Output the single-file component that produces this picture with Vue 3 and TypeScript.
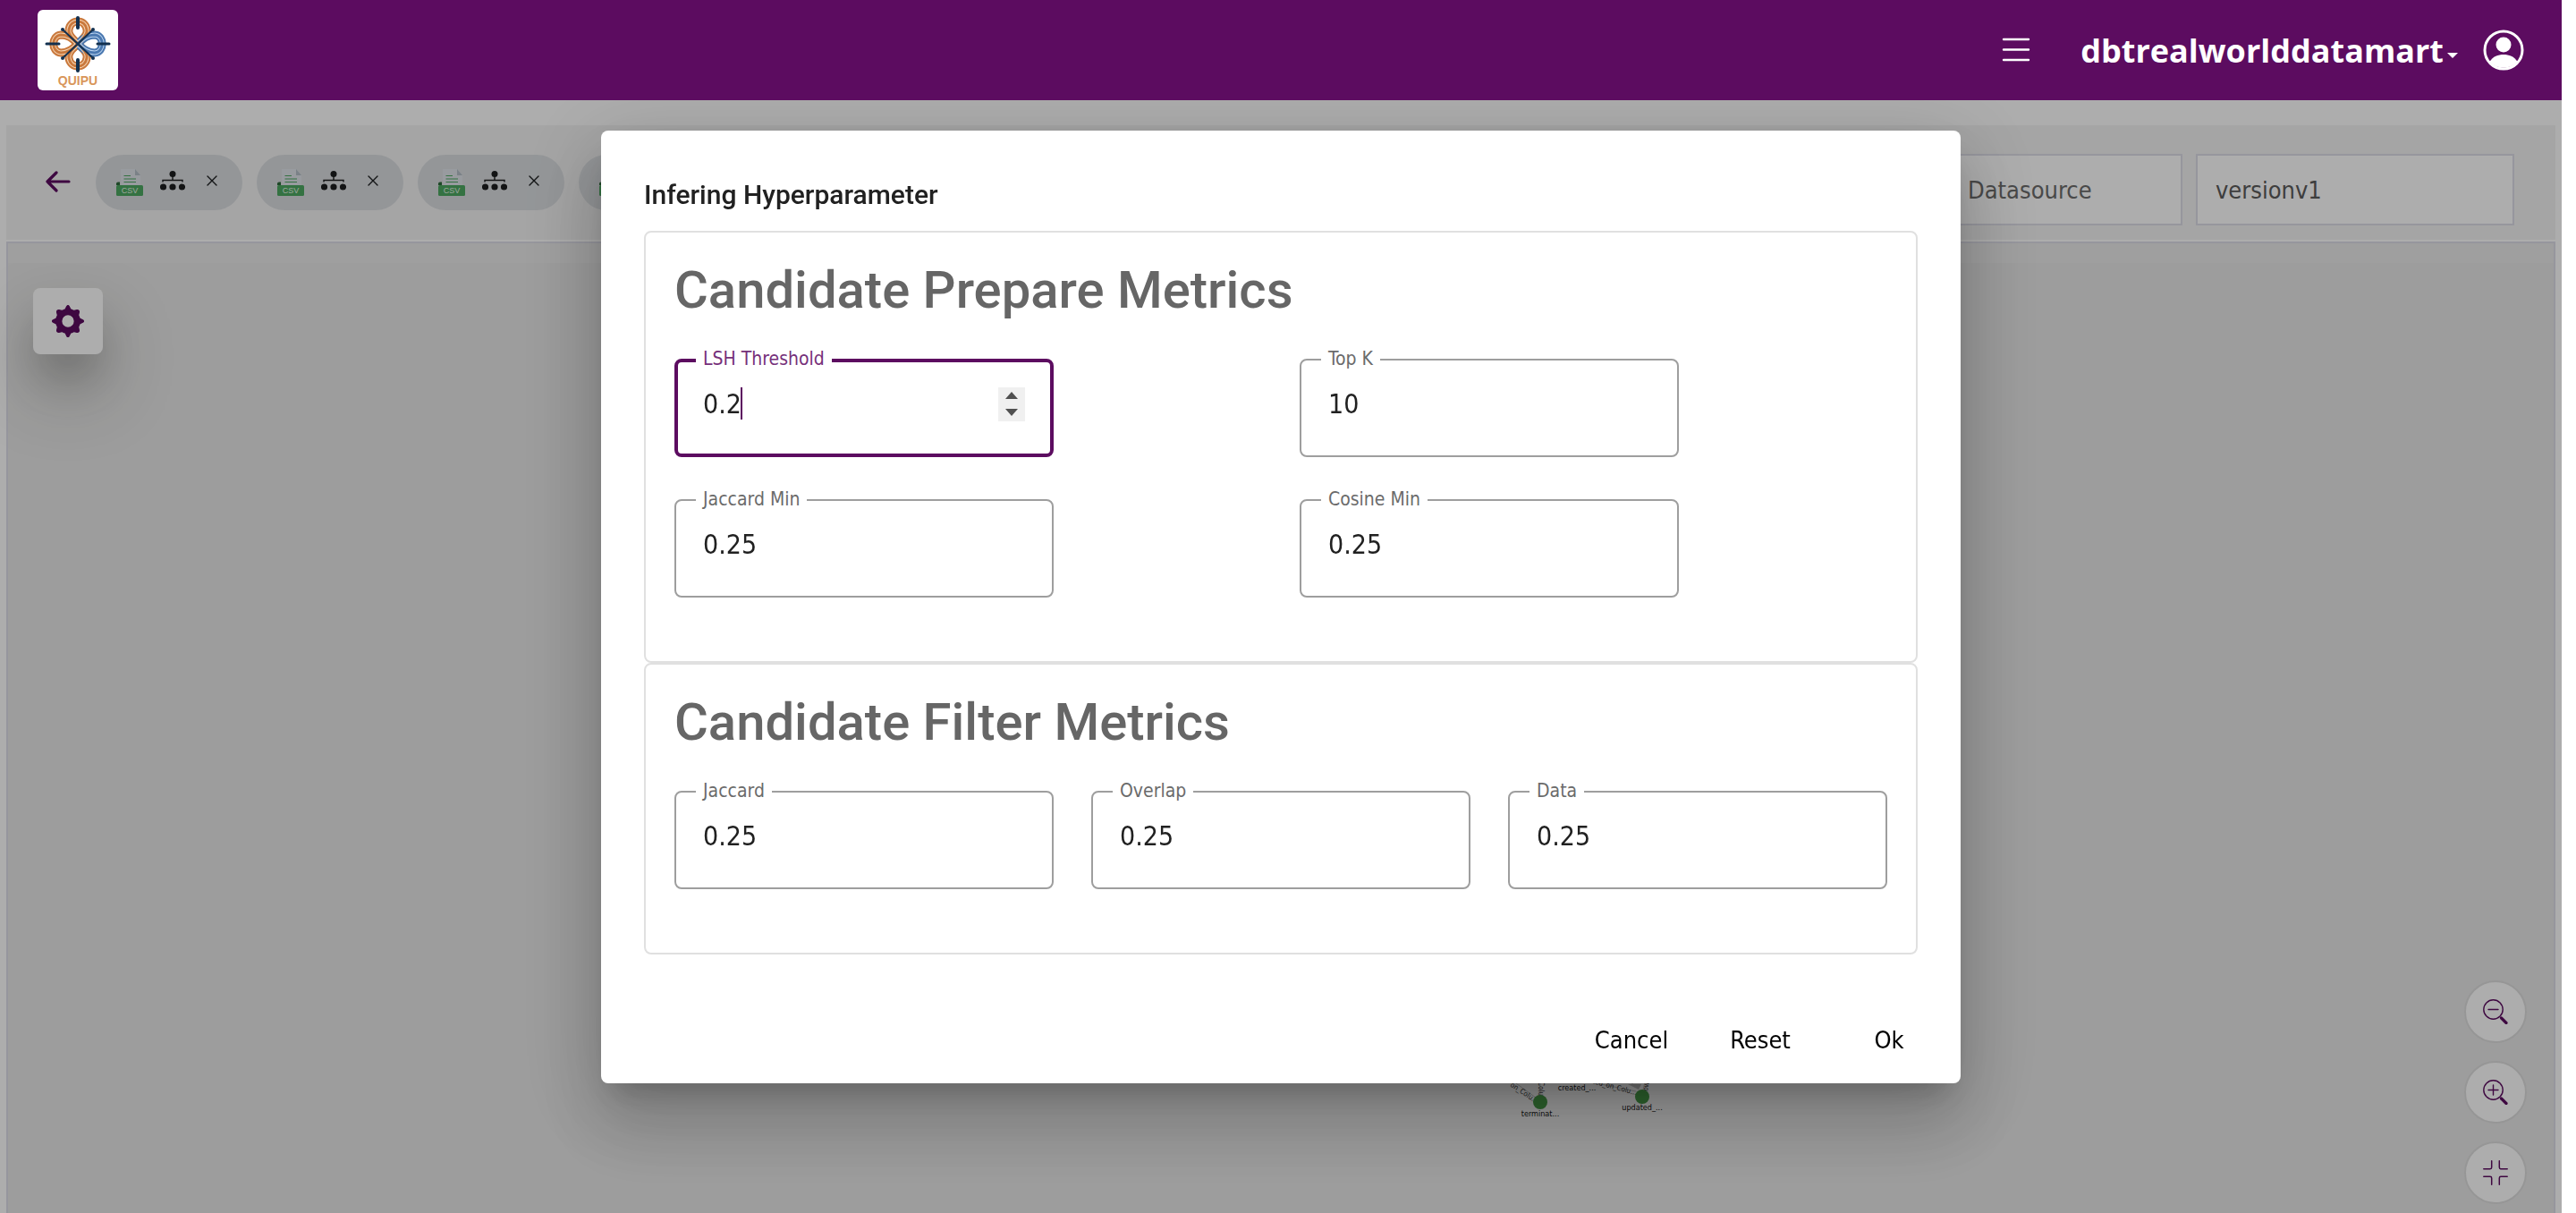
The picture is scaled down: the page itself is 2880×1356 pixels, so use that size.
<script setup lang="ts">
import { reactive } from 'vue'

interface Field {
  id: string
  label: string
  value: string
  active?: boolean
}

interface Group {
  title: string
  layout: string
  fields: Field[]
}

const sources: number[] = [1, 2, 3, 4]

const groups = reactive<Group[]>([
  {
    title: 'Candidate Prepare Metrics',
    layout: 'two',
    fields: [
      { id: 'lsh', label: 'LSH Threshold', value: '0.2', active: true },
      { id: 'topk', label: 'Top K', value: '10' },
      { id: 'jaccard-min', label: 'Jaccard Min', value: '0.25' },
      { id: 'cosine-min', label: 'Cosine Min', value: '0.25' },
    ],
  },
  {
    title: 'Candidate Filter Metrics',
    layout: 'three',
    fields: [
      { id: 'jaccard', label: 'Jaccard', value: '0.25' },
      { id: 'overlap', label: 'Overlap', value: '0.25' },
      { id: 'data', label: 'Data', value: '0.25' },
    ],
  },
])

function step(field: Field, delta: number): void {
  field.value = String(Math.round((Number(field.value) + delta) * 100) / 100)
}
</script>

<template>
  <div class="page">
    <header class="topbar">
      <a class="logo" href="#" aria-label="Home">
        <svg viewBox="0 0 90 90" width="90" height="90">
          <g fill="none" stroke-linecap="round">
            <g stroke="#c9783c" stroke-width="9">
              <path d="M45 38 C36 30 34 26 35 22 C37 10 53 10 55 22 C56 26 54 30 45 38" />
              <path d="M45 38 C36 46 34 50 35 54 C37 66 53 66 55 54 C56 50 54 46 45 38" />
              <path d="M45 38 C37 29 31 28 26 28 C15 29 15 47 26 48 C31 48 37 47 45 38" />
            </g>
            <path stroke="#4a78b0" stroke-width="9" d="M45 38 C53 29 59 28 64 28 C75 29 75 47 64 48 C59 48 53 47 45 38" />
            <g stroke="#f3d2b0" stroke-width="5">
              <path d="M45 38 C36 30 34 26 35 22 C37 10 53 10 55 22 C56 26 54 30 45 38" />
              <path d="M45 38 C36 46 34 50 35 54 C37 66 53 66 55 54 C56 50 54 46 45 38" />
              <path d="M45 38 C37 29 31 28 26 28 C15 29 15 47 26 48 C31 48 37 47 45 38" />
            </g>
            <path stroke="#b9d2ee" stroke-width="5" d="M45 38 C53 29 59 28 64 28 C75 29 75 47 64 48 C59 48 53 47 45 38" />
            <g stroke="#c9783c" stroke-width="3">
              <path d="M45 38 C36 30 34 26 35 22 C37 10 53 10 55 22 C56 26 54 30 45 38" />
              <path d="M45 38 C36 46 34 50 35 54 C37 66 53 66 55 54 C56 50 54 46 45 38" />
              <path d="M45 38 C37 29 31 28 26 28 C15 29 15 47 26 48 C31 48 37 47 45 38" />
            </g>
            <path stroke="#4a78b0" stroke-width="3" d="M45 38 C53 29 59 28 64 28 C75 29 75 47 64 48 C59 48 53 47 45 38" />
            <g stroke="#12304f">
              <path stroke-width="4" d="M45 9V20M45 56V68" />
              <path stroke-width="3" d="M10 38H24M67 38H80" />
              <path stroke-width="2" d="M28 22L62 54M62 22L28 54" />
              <path stroke-width="4" d="M28 22h0M62 54h0M62 22h0M28 54h0" />
            </g>
          </g>
          <text x="45" y="84" text-anchor="middle" class="logo-text">QUIPU</text>
        </svg>
      </a>
      <div class="topbar-right">
        <button class="plain" aria-label="Menu">
          <svg width="32" height="28" viewBox="0 0 32 28" fill="none" stroke="#fff" stroke-width="2.4" stroke-linecap="round">
            <path d="M2 2H30M2 13.500H30M2 25H30" />
          </svg>
        </button>
        <button class="plain account">
          dbtrealworlddatamart
          <svg width="12" height="6" viewBox="0 0 12 6"><path d="M0 0H12L6 6Z" fill="#fff" /></svg>
        </button>
        <button class="plain" aria-label="Profile">
          <svg width="46" height="46" viewBox="0 0 46 46">
            <circle cx="23" cy="23" r="21" fill="none" stroke="#fff" stroke-width="3" />
            <circle cx="23" cy="17" r="8.500" fill="#fff" />
            <path d="M7.500 36C11 30 17 28 23 28S35 30 38.500 36A21 21 0 0 1 7.500 36Z" fill="#fff" />
          </svg>
        </button>
      </div>
    </header>

    <main class="workspace">
      <div class="toolbar">
        <button class="plain back" aria-label="Back">
          <svg width="28" height="24" viewBox="0 0 28 24" fill="none" stroke="#5c0c60" stroke-width="3.200" stroke-linecap="round" stroke-linejoin="round">
            <path d="M26 12H2M12 2L2 12L12 22" />
          </svg>
        </button>
        <div class="chips">
          <div v-for="s in sources" :key="s" class="chip">
            <svg class="csv" width="30" height="30" viewBox="0 0 30 30">
              <path d="M5 0H21L27 7V19H5Z" fill="#e0e5ea" />
              <path d="M21 0L27 7H21Z" fill="#b4bfc8" />
              <path d="M8.500 7.500H16M8.500 11H22M8.500 14.500H22" stroke="#4da862" stroke-width="1.200" />
              <path d="M0 18V16Q0 14.500 2 14.500H4V18Z" fill="#2f6b3c" />
              <rect y="18" width="30" height="12" rx="1.500" fill="#4da862" />
              <text x="15" y="27" text-anchor="middle" class="csv-text">CSV</text>
            </svg>
            <svg class="tree" width="28" height="22" viewBox="0 0 28 22" fill="#1c1e1f">
              <circle cx="14" cy="3.500" r="3.500" />
              <circle cx="3.500" cy="18" r="3.600" />
              <circle cx="14" cy="18" r="3.600" />
              <circle cx="24.500" cy="18" r="3.600" />
              <path d="M14 5V10M3 12.500V10.500H25V12.500" fill="none" stroke="#1c1e1f" stroke-width="1.400" />
            </svg>
            <button class="plain" aria-label="Remove">
              <svg width="12" height="12" viewBox="0 0 12 12" fill="none" stroke="#1c1e1f" stroke-width="1.400" stroke-linecap="round">
                <path d="M1 1L11 11M11 1L1 11" />
              </svg>
            </button>
          </div>
        </div>
        <div class="pickers">
          <select class="box source" aria-label="Datasource">
            <option>Datasource</option>
          </select>
          <input class="box version" aria-label="Version" value="versionv1" />
        </div>
      </div>

      <div class="canvas">
        <button class="settings" aria-label="Settings">
          <svg width="38" height="38" viewBox="0 0 24 24" fill="#5c0c60">
            <path fill-rule="evenodd" d="M12 .6C13.200 .6 13.400 2.300 14.200 3.500C15.200 3.800 15.600 4 16.300 4.300C17.700 4 19 3.300 19.800 4.200C20.700 5 20 6.300 19.700 7.700C20 8.400 20.200 8.800 20.500 9.800C21.700 10.600 23.400 10.800 23.400 12S21.700 13.400 20.500 14.200C20.200 15.200 20 15.600 19.700 16.300C20 17.700 20.700 19 19.800 19.800C19 20.700 17.700 20 16.300 19.700C15.600 20 15.200 20.200 14.200 20.500C13.400 21.700 13.200 23.400 12 23.400S10.600 21.700 9.800 20.500C8.800 20.200 8.400 20 7.700 19.700C6.300 20 5 20.700 4.200 19.800C3.300 19 4 17.700 4.300 16.300C4 15.600 3.800 15.200 3.500 14.200C2.300 13.400 .6 13.200 .6 12S2.300 10.600 3.500 9.800C3.800 8.800 4 8.400 4.300 7.700C4 6.300 3.300 5 4.200 4.200C5 3.300 6.300 4 7.700 4.300C8.400 4 8.800 3.800 9.800 3.500C10.600 2.300 10.800 .6 12 .6ZM12 7.800A4.200 4.200 0 1 0 12 16.200A4.200 4.200 0 1 0 12 7.800Z" />
          </svg>
        </button>

        <svg class="graph" width="240" height="60" viewBox="0 0 240 60">
          <g stroke="#b5b5b5" stroke-width="1">
            <path d="M28 0L57 21M62 0V20M120 4L169 14M158 0L172 11M180 0L177 12" />
          </g>
          <path d="M160 6L172 12L175 6Z" fill="#b0b0b0" />
          <text class="edge" transform="translate(28 8) rotate(34)">on_Colu...</text>
          <text class="edge" transform="translate(60 3) rotate(90)">Colu</text>
          <text class="edge" transform="translate(120 5) rotate(15)">ted_on_Colu...</text>
          <text class="edge" transform="translate(182 14) rotate(-80)">ow</text>
          <circle cx="62" cy="26" r="8" fill="#439443" />
          <circle cx="176" cy="20" r="8" fill="#439443" />
          <text class="node" x="62" y="42">terminat...</text>
          <text class="node" x="176" y="35">updated_...</text>
          <text class="node" x="103" y="13">created_...</text>
        </svg>

        <div class="zoom">
          <button class="round" aria-label="Zoom out">
            <svg width="28" height="28" viewBox="0 0 28 28" fill="none" stroke="#5c0c60" stroke-width="1.400" stroke-linecap="round">
              <circle cx="11.500" cy="11.500" r="10.700" />
              <path d="M6 11.500H17" />
              <path d="M20.500 21L26 26.500" stroke-width="3.200" />
            </svg>
          </button>
          <button class="round" aria-label="Zoom in">
            <svg width="28" height="28" viewBox="0 0 28 28" fill="none" stroke="#5c0c60" stroke-width="1.400" stroke-linecap="round">
              <circle cx="11.500" cy="11.500" r="10.700" />
              <path d="M6 11.500H17M11.500 6V17" />
              <path d="M20.500 21L26 26.500" stroke-width="3.200" />
            </svg>
          </button>
          <button class="round" aria-label="Fit">
            <svg width="28" height="28" viewBox="0 0 28 28" fill="none" stroke="#5c0c60" stroke-width="1.500" stroke-linecap="round">
              <path d="M9.700 .8V8Q9.700 9.700 8 9.700H.8M18.300 .8V8Q18.300 9.700 20 9.700H27.200M.8 18.300H8Q9.700 18.300 9.700 20V27.200M27.200 18.300H20Q18.300 18.300 18.300 20V27.200" />
            </svg>
          </button>
        </div>
      </div>
    </main>

    <div class="backdrop">
      <form class="dialog" role="dialog" aria-labelledby="dialog-title" @submit.prevent>
        <div class="dialog-body">
          <h2 id="dialog-title" class="title">Infering Hyperparameter</h2>
          <section v-for="g in groups" :key="g.title" class="card">
            <h3 class="heading">{{ g.title }}</h3>
            <div class="grid" :class="g.layout">
              <div v-for="f in g.fields" :key="f.id" class="field" :class="{ active: f.active }">
                <label :for="f.id">{{ f.label }}</label>
                <input :id="f.id" v-model="f.value" type="number" step="0.01" />
                <template v-if="f.active">
                  <span class="caret"></span>
                  <span class="spinner">
                    <button type="button" aria-label="Increase" @click="step(f, 0.01)">
                      <svg width="14" height="8" viewBox="0 0 14 8"><path d="M7 0L14 8H0Z" fill="#505050" /></svg>
                    </button>
                    <button type="button" aria-label="Decrease" @click="step(f, -0.01)">
                      <svg width="14" height="8" viewBox="0 0 14 8"><path d="M0 0H14L7 8Z" fill="#505050" /></svg>
                    </button>
                  </span>
                </template>
              </div>
            </div>
          </section>
        </div>
        <div class="actions">
          <button type="button">Cancel</button>
          <button type="reset">Reset</button>
          <button type="submit">Ok</button>
        </div>
      </form>
    </div>
  </div>
</template>

<style>
body {
  margin: 0;
  background: #fff;
}
</style>

<style scoped>
.page {
  --purple: #5c0c60;
  --ui: "DejaVu Sans Condensed", "Noto Sans", sans-serif;
  display: flex;
  flex-direction: column;
  min-height: 100vh;
  box-sizing: border-box;
  padding-right: 16px;
  font-family: var(--ui);
}

.page * {
  box-sizing: border-box;
}

.plain {
  display: flex;
  align-items: center;
  padding: 0;
  border: 0;
  background: none;
}

svg {
  display: block;
}

.topbar {
  position: relative;
  z-index: 3;
  display: flex;
  align-items: center;
  justify-content: space-between;
  height: 112px;
  padding: 0 42px;
  background: var(--purple);
}

.logo {
  border-radius: 6px;
  background: #fff;
}

.logo-text {
  font: bold 14px "Liberation Sans", sans-serif;
  fill: #d9965a;
}

.topbar-right {
  display: flex;
  align-items: center;
}

.account {
  gap: 4px;
  margin: 0 28px 0 56px;
  color: #fff;
  font: bold 36px "Open Sans", sans-serif;
}

.account svg {
  margin-top: 12px;
}

.workspace {
  flex: 1;
  display: flex;
  flex-direction: column;
  gap: 2px;
  padding: 28px 7px 0;
}

.toolbar {
  display: flex;
  align-items: flex-start;
  height: 128px;
  padding: 32px 46px 0 44px;
  background: #f3f3f3;
}

.back {
  height: 62px;
  margin-right: 28px;
}

.chips {
  display: flex;
  gap: 16px;
  padding-top: 1px;
}

.chip {
  display: flex;
  align-items: center;
  width: 164px;
  height: 62px;
  padding: 0 23px;
  border-radius: 31px;
  background: #dbdee1;
}

.chip .tree {
  margin: 0 24px 4px 19px;
}

.chip .plain {
  margin-bottom: 4px;
}

.csv-text {
  font: 9px "Liberation Sans", sans-serif;
  fill: #e4f3e7;
}

.pickers {
  display: flex;
  gap: 15px;
  margin-left: auto;
}

.box {
  width: 356px;
  height: 80px;
  padding: 0 20px;
  border: 2px solid #dedee8;
  border-radius: 0;
  background: #fff;
  color: #5c5c5c;
  font: 27px var(--ui);
  appearance: none;
}

.source {
  width: 262px;
  color: #6c6c6c;
}

.canvas {
  flex: 1;
  position: relative;
  padding: 50px 28px 0;
  border: 2px solid #dedee8;
  border-bottom: 0;
  background: linear-gradient(#ebebeb 22px, #e7e7e7 22px);
}

.settings {
  display: flex;
  align-items: center;
  justify-content: center;
  width: 78px;
  height: 74px;
  border: 0;
  border-radius: 8px;
  background: #fff;
  box-shadow: 0 40px 80px rgba(50, 50, 40, 0.25), 0 30px 50px -10px rgba(0, 0, 0, 0.25);
}

.graph {
  position: absolute;
  right: 955px;
  bottom: 90px;
}

.edge {
  font: 8px var(--ui);
  fill: #333;
}

.node {
  font: 9px var(--ui);
  fill: #111;
  text-anchor: middle;
}

.zoom {
  position: absolute;
  right: 30px;
  bottom: 10px;
  display: flex;
  flex-direction: column;
  gap: 20px;
}

.round {
  display: flex;
  align-items: center;
  justify-content: center;
  width: 70px;
  height: 70px;
  padding: 0;
  border: 2px solid #dedede;
  border-radius: 50%;
  background: #fff;
}

.backdrop {
  position: fixed;
  inset: 0 16px 0 0;
  z-index: 2;
  display: flex;
  align-items: center;
  justify-content: center;
  background: rgba(0, 0, 0, 0.32);
}

.dialog {
  width: 1520px;
  max-width: 100%;
  border-radius: 8px;
  background: #fff;
  box-shadow: 0 22px 30px -14px rgba(0, 0, 0, 0.2), 0 48px 76px 6px rgba(0, 0, 0, 0.14), 0 18px 92px 16px rgba(0, 0, 0, 0.12);
}

.dialog-body {
  padding: 48px;
}

.title {
  margin: 0 0 16px;
  color: #212121;
  font: 500 30px/48px Roboto, sans-serif;
}

.card {
  padding: 32px 32px 71px;
  border: 2px solid #e0e0e0;
  border-radius: 8px;
}

.heading {
  margin: 0 0 45px;
  color: #666;
  font: 500 58px/64px Roboto, sans-serif;
}

.grid {
  display: grid;
  gap: 47px 42px;
}

.two {
  grid-template-columns: 1fr 1fr;
}

.three {
  grid-template-columns: 1fr 1fr 1fr;
}

.field {
  position: relative;
  width: 100%;
  max-width: 424px;
  height: 110px;
  padding: 30px;
  border: 2px solid #9e9e9e;
  border-radius: 8px;
}

.field.active {
  padding: 28px;
  border: 4px solid var(--purple);
}

.field label {
  position: absolute;
  top: -15px;
  left: 22px;
  padding: 0 8px;
  background: #fff;
  color: #6b6b6b;
  font-size: 21px;
  line-height: 26px;
}

.field.active label {
  top: -17px;
  left: 20px;
  color: #76307a;
}

.field input {
  display: block;
  width: 100%;
  height: 38px;
  padding: 0;
  border: 0;
  outline: 0;
  background: none;
  color: #212121;
  font: 30px var(--ui);
  appearance: textfield;
}

.field input::-webkit-inner-spin-button {
  appearance: none;
}

.caret {
  position: absolute;
  top: 28px;
  left: 70px;
  width: 2px;
  height: 36px;
  background: var(--purple);
}

.spinner {
  position: absolute;
  top: 28px;
  right: 28px;
  display: flex;
  flex-direction: column;
  width: 30px;
  height: 38px;
  background: #f0f0f0;
}

.spinner button {
  flex: 1;
  display: flex;
  align-items: center;
  justify-content: center;
  padding: 0;
  border: 0;
  background: none;
}

.actions {
  display: flex;
  justify-content: flex-end;
  gap: 16px;
  padding: 16px;
}

.actions button {
  width: 128px;
  height: 64px;
  padding: 0;
  border: 0;
  background: none;
  color: #000;
  font: 27px var(--ui);
}
</style>
